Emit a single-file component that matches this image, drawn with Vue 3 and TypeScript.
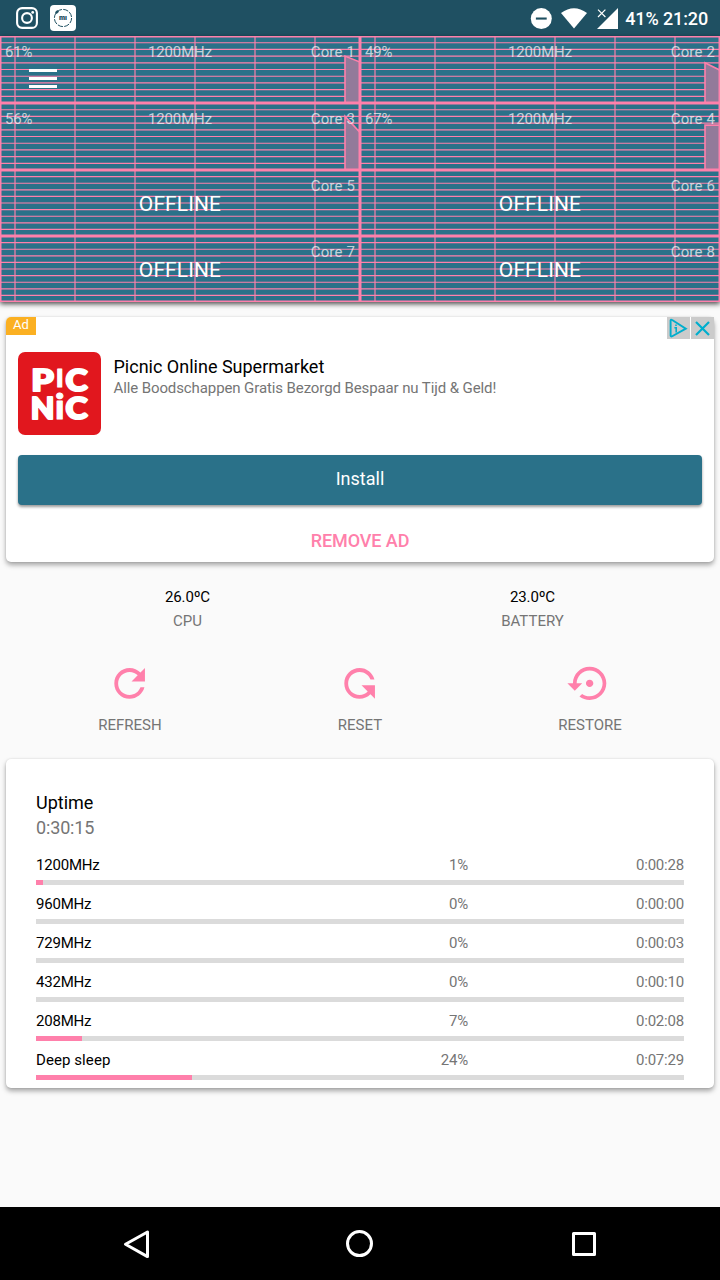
<script setup lang="ts">
interface Core {
  name: string
  height: number
  load?: number
  previous?: number
}

interface Frequency {
  label: string
  percent: string
  time: string
  fill: number
}

const cores: Core[] = [
  { name: 'Core 1', height: 67, load: 61, previous: 70 },
  { name: 'Core 2', height: 67, load: 49, previous: 60 },
  { name: 'Core 3', height: 67, load: 56, previous: 80 },
  { name: 'Core 4', height: 67, load: 67, previous: 67 },
  { name: 'Core 5', height: 66 },
  { name: 'Core 6', height: 66 },
  { name: 'Core 7', height: 66 },
  { name: 'Core 8', height: 66 },
]

const columns = [15, 75, 135, 195, 255, 315]
const rows = [1, 2, 3, 4, 5, 6, 7, 8, 9]

function graph(core: Core): string {
  const y = (v: number) => core.height * (1 - v / 100)
  return `M345 ${core.height}V${y(core.previous ?? 0)}L360 ${y(core.load ?? 0)}V${core.height}`
}

const frequencies: Frequency[] = [
  { label: '1200MHz', percent: '1%', time: '0:00:28', fill: 7 },
  { label: '960MHz', percent: '0%', time: '0:00:00', fill: 0 },
  { label: '729MHz', percent: '0%', time: '0:00:03', fill: 0 },
  { label: '432MHz', percent: '0%', time: '0:00:10', fill: 0 },
  { label: '208MHz', percent: '7%', time: '0:02:08', fill: 46 },
  { label: 'Deep sleep', percent: '24%', time: '0:07:29', fill: 156 },
]
</script>

<template>
  <div class="screen">
    <header class="status">
      <svg class="insta" width="24" height="24" viewBox="0 0 24 24" fill="none" stroke="#fff">
        <rect x="2.1" y="2.1" width="19.8" height="19.8" rx="5" stroke-width="2.1" />
        <circle cx="12" cy="12" r="4.9" stroke-width="2.1" />
        <circle cx="17.7" cy="6.4" r="1.4" fill="#fff" stroke="none" />
      </svg>
      <svg class="mi" width="26" height="26" viewBox="0 0 26 26">
        <rect width="26" height="26" rx="4" fill="#fff" />
        <circle cx="13" cy="13" r="8.6" fill="none" stroke="#1e5061" stroke-width="1" stroke-dasharray="5.4 1.35" />
        <path d="M5.8 8.2L8.2 5.8" stroke="#1e5061" stroke-width="2.4" />
        <text x="13" y="15" text-anchor="middle" textLength="8" lengthAdjust="spacingAndGlyphs" class="mi-text">mı</text>
      </svg>
      <div class="spacer"></div>
      <svg class="dnd" width="22" height="22" viewBox="0 0 22 22">
        <circle cx="11.3" cy="10.6" r="10.5" fill="#fff" />
        <rect x="5.9" y="9.5" width="10.8" height="2.1" fill="#1e5061" />
      </svg>
      <svg class="wifi" width="26" height="21" viewBox="0 0 26 21">
        <path d="M0 5Q13-4.4 26 5L13 20.6z" fill="#fff" />
      </svg>
      <svg class="signal" width="21" height="21" viewBox="0 0 21 21">
        <path d="M21 0V21H0z" fill="#fff" />
        <path d="M1 1.6L8.4 9M8.4 1.6L1 9" stroke="#1e5061" stroke-width="3.2" />
        <path d="M1 1.6L8.4 9M8.4 1.6L1 9" stroke="#fff" stroke-width="1.2" />
      </svg>
      <span class="clock">41% 21:20</span>
    </header>

    <section class="cores">
      <div v-for="core in cores" :key="core.name" class="core" :class="core.height === 67 ? 'tall' : 'short'">
        <svg class="plot" width="360" :height="core.height" :viewBox="`0 0 360 ${core.height}`">
          <g stroke="#ff80ab" stroke-width="1.15">
            <line v-for="r in rows" :key="r" x1="0" x2="360" :y1="(r * core.height) / 10" :y2="(r * core.height) / 10" />
            <line v-for="c in columns" :key="c" :x1="c" :x2="c" y1="0" :y2="core.height" />
          </g>
          <path v-if="core.load" :d="graph(core)" fill="#937a9a" stroke="#ff80ab" stroke-width="1.6" />
          <rect width="360" :height="core.height" fill="none" stroke="#ff80ab" stroke-width="3" />
        </svg>
        <div class="labels">
          <span class="load">{{ core.load ? core.load + '%' : '' }}</span>
          <span class="freq">{{ core.load ? '1200MHz' : '' }}</span>
          <span class="name">{{ core.name }}</span>
        </div>
        <div v-if="!core.load" class="offline">OFFLINE</div>
      </div>
      <svg class="menu" width="28" height="21" viewBox="0 0 28 21" stroke="#fff" stroke-width="3">
        <path d="M0 2.4H28M0 10.4H28M0 18.4H28" />
      </svg>
    </section>

    <main>
      <article class="card ad">
        <span class="ad-tag">Ad</span>
        <div class="choices">
          <span class="choice">
            <svg width="22" height="22" viewBox="0 0 22 22" fill="none" stroke="#00aecd" stroke-width="1.9">
              <path d="M3.6 3.4V18.6Q3.8 20 5.2 19.2L18.8 11.6L5.2 3Q3.8 2 3.6 3.4z" />
              <path d="M9 7.4V9M7.4 10.8H9.2V15.4" stroke-width="1.6" />
            </svg>
          </span>
          <span class="choice">
            <svg width="22" height="22" viewBox="0 0 22 22" fill="none" stroke="#00aecd" stroke-width="2.2">
              <path d="M5 5L18 18M18 5L5 18" />
            </svg>
          </span>
        </div>
        <div class="promo">
          <svg class="logo" width="83" height="83" viewBox="0 0 83 83">
            <rect width="83" height="83" rx="7" fill="#e1171e" />
            <g class="logo-text">
              <text x="13.2" y="38.6" textLength="22.5" lengthAdjust="spacingAndGlyphs">P</text>
              <text x="37.8" y="34.6" textLength="8" lengthAdjust="spacingAndGlyphs" class="logo-stem">I</text>
              <text x="47.4" y="38.6" textLength="22" lengthAdjust="spacingAndGlyphs">C</text>
              <text x="12.8" y="66.6" textLength="23.6" lengthAdjust="spacingAndGlyphs">N</text>
              <text x="37" y="66.8" textLength="9.5" lengthAdjust="spacingAndGlyphs" class="logo-i">i</text>
              <text x="47.4" y="66.6" textLength="22" lengthAdjust="spacingAndGlyphs">C</text>
            </g>
          </svg>
          <div class="copy">
            <div class="title">Picnic Online Supermarket</div>
            <div class="subtitle">Alle Boodschappen Gratis Bezorgd Bespaar nu Tijd &amp; Geld!</div>
          </div>
        </div>
        <button class="install">Install</button>
        <div class="remove">REMOVE AD</div>
      </article>

      <section class="temps">
        <div class="temp"><span class="value">26.0ºC</span><span class="caption">CPU</span></div>
        <div class="temp"><span class="value">23.0ºC</span><span class="caption">BATTERY</span></div>
      </section>

      <section class="actions">
        <div class="action">
          <svg width="46" height="46" viewBox="0.2 -0.2 24 24" fill="#ff80ab">
            <path d="M17.65 6.35C16.2 4.9 14.21 4 12 4c-4.42 0-7.99 3.58-7.99 8s3.57 8 7.99 8c3.73 0 6.84-2.55 7.73-6h-2.08c-.82 2.33-3.04 4-5.65 4-3.31 0-6-2.69-6-6s2.69-6 6-6c1.66 0 3.14.69 4.22 1.78L13 11h7V4l-2.35 2.35z" />
          </svg>
          <span class="caption">REFRESH</span>
        </div>
        <div class="action">
          <svg width="46" height="46" viewBox="0.2 -0.2 24 24" fill="#ff80ab">
            <path transform="matrix(1 0 0 -1 0 24)" d="M17.65 6.35C16.2 4.9 14.21 4 12 4c-4.42 0-7.99 3.58-7.99 8s3.57 8 7.99 8c3.73 0 6.84-2.55 7.73-6h-2.08c-.82 2.33-3.04 4-5.65 4-3.31 0-6-2.69-6-6s2.69-6 6-6c1.66 0 3.14.69 4.22 1.78L13 11h7V4l-2.35 2.35z" />
          </svg>
          <span class="caption">RESET</span>
        </div>
        <div class="action">
          <svg width="46" height="46" viewBox="-0.2 -0.6 24.8 24.8" fill="#ff80ab">
            <path d="M14 12c0-1.1-.9-2-2-2s-2 .9-2 2 .9 2 2 2 2-.9 2-2zm-2-9c-4.97 0-9 4.03-9 9H0l4 4 4-4H5c0-3.87 3.13-7 7-7s7 3.13 7 7-3.13 7-7 7c-1.51 0-2.91-.49-4.06-1.3l-1.42 1.44C8.04 20.3 9.94 21 12 21c4.97 0 9-4.03 9-9s-4.03-9-9-9z" />
          </svg>
          <span class="caption">RESTORE</span>
        </div>
      </section>

      <article class="card uptime">
        <div class="heading">Uptime</div>
        <div class="total">0:30:15</div>
        <div class="list">
          <div v-for="f in frequencies" :key="f.label" class="entry">
            <div class="entry-text">
              <span class="entry-label" :class="{ mhz: f.label.endsWith('MHz') }">{{ f.label }}</span>
              <span class="entry-percent">{{ f.percent }}</span>
              <span class="entry-time">{{ f.time }}</span>
            </div>
            <div class="track"><div class="bar" :style="{ width: f.fill + 'px' }"></div></div>
          </div>
        </div>
      </article>
    </main>

    <nav class="nav">
      <svg width="28" height="32" viewBox="0 0 28 32" fill="none" stroke="#fff" stroke-width="3" stroke-linejoin="round">
        <path d="M25.5 4V28.6L3.5 16.3z" />
      </svg>
      <svg width="32" height="32" viewBox="0 0 32 32" fill="none" stroke="#fff" stroke-width="3">
        <circle cx="14.5" cy="15.6" r="12" />
      </svg>
      <svg width="24" height="24" viewBox="0 0 24 24" fill="none" stroke="#fff" stroke-width="3" stroke-linejoin="round">
        <rect x="1.5" y="1.5" width="21" height="21" />
      </svg>
    </nav>
  </div>
</template>

<style>
body {
  margin: 0;
  background: #fafafa;
}
</style>

<style scoped>
.screen {
  width: 720px;
  height: 1280px;
  display: flex;
  flex-direction: column;
  overflow: hidden;
  background: #fafafa;
  font-family: Roboto, "Liberation Sans", sans-serif;
  font-size: 15px;
  color: #000;
}
svg {
  display: block;
  flex: none;
}
.status {
  height: 36px;
  flex: none;
  display: flex;
  align-items: center;
  background: #1f5062;
  padding: 0 12px 0 15px;
}
.mi {
  margin-left: 11px;
}
.mi-text {
  font: 900 7px Inter, sans-serif;
  fill: #1e5061;
}
.spacer {
  flex: 1;
}
.dnd {
  margin-top: 1px;
}
.wifi {
  margin: 0 10px 0 9px;
}
.clock {
  margin-left: 7px;
  font-size: 18px;
  font-weight: 500;
  letter-spacing: -0.12px;
  line-height: 36px;
  padding-top: 2px;
  color: #fff;
  white-space: nowrap;
}
.cores {
  position: relative;
  z-index: 1;
  flex: none;
  display: grid;
  grid-template-columns: 360px 360px;
  background: #2a7189;
  box-shadow: 0 2px 5px rgba(0, 0, 0, 0.7);
}
.core {
  position: relative;
  display: flex;
  flex-direction: column;
}
.tall {
  height: 67px;
}
.short {
  height: 66px;
}
.plot {
  position: absolute;
  inset: 0;
}
.labels {
  position: relative;
  display: grid;
  grid-template-columns: 1fr auto 1fr;
  padding: 4px 5px 0;
  line-height: 24px;
  color: rgba(255, 255, 255, 0.7);
}
.load,
.freq {
  letter-spacing: -0.15px;
}
.name {
  text-align: right;
  letter-spacing: 0.15px;
}
.offline {
  position: relative;
  margin-top: -7px;
  text-align: center;
  font-size: 21px;
  letter-spacing: 0.1px;
  line-height: 26px;
  color: #fff;
}
.menu {
  position: absolute;
  left: 29px;
  top: 32px;
}
main {
  flex: 1;
  padding: 15px 6px 0;
}
.card {
  background: #fff;
  border-radius: 5px;
  box-shadow: 0 3px 5px rgba(0, 0, 0, 0.34), 0 0 2px rgba(0, 0, 0, 0.12);
}
.ad {
  position: relative;
  height: 210px;
  padding: 35px 12px 0;
}
.ad-tag {
  position: absolute;
  left: 0;
  top: 0;
  width: 30px;
  height: 18px;
  border-top-left-radius: 5px;
  background: #fbb022;
  color: #fff;
  font-size: 13px;
  letter-spacing: 0.2px;
  line-height: 16px;
  text-align: center;
}
.choices {
  position: absolute;
  right: 0.5px;
  top: 0;
  display: flex;
  gap: 1.5px;
}
.choice {
  width: 22.5px;
  height: 22px;
  background: #cbcbcb;
}
.promo {
  display: flex;
  height: 102.5px;
}
.copy {
  margin-left: 12.5px;
  padding-top: 4px;
}
.title {
  font-size: 18px;
  line-height: 22px;
}
.subtitle {
  font-size: 15px;
  letter-spacing: -0.105px;
  line-height: 20px;
  color: #757575;
}
.logo-text {
  font: 900 31px Lato, sans-serif;
  fill: #fff;
  stroke: #fff;
  stroke-width: 2.2;
  stroke-linejoin: round;
}
.logo-stem {
  font-size: 25px;
  stroke-width: 1;
}
.logo-i {
  font-size: 34px;
  stroke-width: 1;
}
.install {
  display: block;
  width: 684px;
  height: 50px;
  padding: 0 0 2px;
  border: 0;
  border-radius: 4px;
  background: #2a7189;
  color: #fff;
  font: 18px/48px Roboto, sans-serif;
  box-shadow: 0 2px 3px rgba(0, 0, 0, 0.4);
}
.remove {
  margin-top: 24.5px;
  text-align: center;
  font-size: 18px;
  font-weight: 500;
  letter-spacing: -0.08px;
  line-height: 24px;
  color: #ff80ab;
}
.temps {
  display: flex;
  padding: 23px 9px 0;
}
.temp {
  flex: 1;
  display: flex;
  flex-direction: column;
  align-items: center;
  line-height: 24px;
}
.value {
  letter-spacing: -0.15px;
}
.caption {
  color: #757575;
  line-height: 24px;
}
.actions {
  display: flex;
  height: 126px;
  padding: 0 9px;
}
.action {
  flex: 1;
  display: flex;
  flex-direction: column;
  align-items: center;
  padding-top: 27px;
}
.action .caption {
  margin-top: 7px;
}
.uptime {
  padding: 31px 30px 8px;
}
.heading,
.total {
  font-size: 18px;
  line-height: 25px;
}
.total {
  color: #757575;
  letter-spacing: -0.15px;
}
.list {
  display: flex;
  flex-direction: column;
  gap: 7px;
  margin-top: 13px;
}
.entry-text {
  display: grid;
  grid-template-columns: 1fr 1fr 1fr;
  line-height: 24px;
  margin-bottom: 3px;
}
.entry-label {
  letter-spacing: 0.08px;
}
.mhz,
.entry-percent,
.entry-time {
  letter-spacing: -0.2px;
}
.entry-percent,
.entry-time {
  text-align: right;
  color: #757575;
}
.track {
  height: 5px;
  background: #dbdbdb;
}
.bar {
  height: 5px;
  background: #ff80ab;
}
.nav {
  flex: none;
  height: 73px;
  display: flex;
  align-items: center;
  justify-content: space-between;
  padding: 0 124px 0 122px;
  background: #000;
}
</style>
